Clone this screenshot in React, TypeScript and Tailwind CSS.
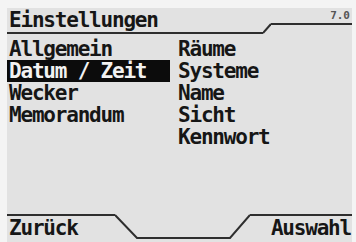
const rowsLeft = ["Allgemein", "Datum / Zeit", "Wecker", "Memorandum"];
const rowsRight = ["Räume", "Systeme", "Name", "Sicht", "Kennwort"];

const App: React.FC = () => {
  const selected = 1;

  return (
    <div className="flex h-[242px] w-[356px] bg-[#f4f4f4] pl-[7px] pr-[4px] pt-[8px] font-['DejaVu_Sans_Mono',monospace] font-bold text-[#161616]">
      <div className="flex flex-1 flex-col bg-[#e2e2e2]">
        {/* Kopfzeile */}
        <div className="flex h-[26px]">
          <div className="flex-1 border-b-2 border-[#2e2e2e] pl-[2px] text-[21px] leading-[24px] tracking-[-1.2px]">
            Einstellungen
          </div>
          <svg width="8" height="26" className="shrink-0">
            <line x1="0" y1="25" x2="8" y2="16" stroke="#2e2e2e" strokeWidth="2" />
          </svg>
          <div className="h-[17px] w-[81px] border-b-2 border-[#2e2e2e] pr-[2px] text-right text-[11px] leading-[15px] text-[#555]">
            7.0
          </div>
        </div>

        {/* Menü */}
        <div className="flex flex-1 pt-[4px] text-[21px] leading-[22px] tracking-[-1.2px]">
          <div className="flex w-[163px] flex-col">
            {rowsLeft.map((label, i) => (
              <div
                key={label}
                className={
                  i === selected
                    ? "h-[22px] bg-[#0c0c0c] pl-[2px] text-[#f2f2f2]"
                    : "h-[22px] pl-[2px]"
                }
              >
                {label}
              </div>
            ))}
          </div>
          <div className="ml-[8px] flex flex-col">
            {rowsRight.map((label) => (
              <div key={label} className="h-[22px]">
                {label}
              </div>
            ))}
          </div>
        </div>

        {/* Softkeys */}
        <div className="flex h-[28px] text-[21px] leading-[24px] tracking-[-1.2px]">
          <div className="w-[108px] border-t-2 border-[#2e2e2e] pl-[2px]">Zurück</div>
          <svg width="135" height="28" className="shrink-0">
            <path
              d="M0 1 L22 24 L115 24 L135 1"
              fill="none"
              stroke="#2e2e2e"
              strokeWidth="2"
            />
          </svg>
          <div className="flex-1 border-t-2 border-[#2e2e2e] pr-[1px] text-right">Auswahl</div>
        </div>
      </div>
    </div>
  );
};

export default App;
